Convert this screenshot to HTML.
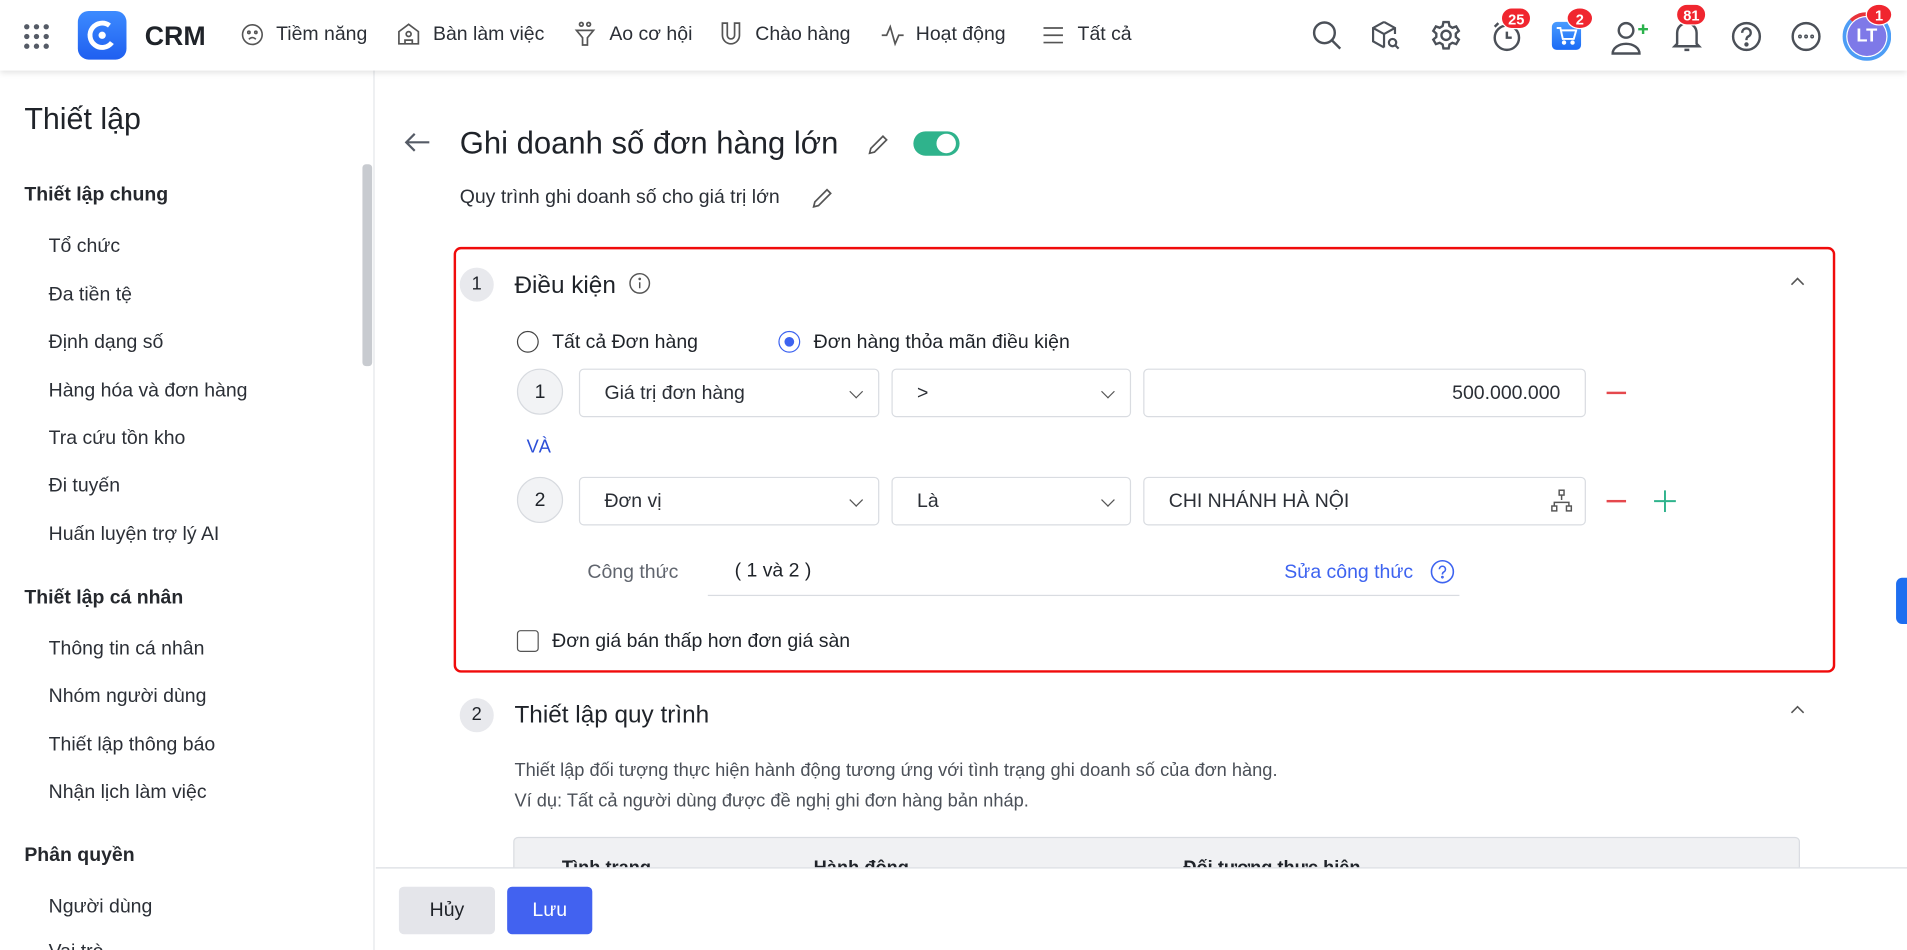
<!DOCTYPE html>
<html><head><meta charset="utf-8">
<style>
*{box-sizing:border-box;margin:0;padding:0}
html,body{width:1907px;height:950px;overflow:hidden;background:#fff}
#w{position:absolute;left:0;top:0;width:1568px;height:781px;transform:scale(1.2162,1.2164);transform-origin:0 0;font-family:"Liberation Sans","Noto Sans CJK SC",sans-serif;color:#1f2329;overflow:hidden}
.a{position:absolute;white-space:nowrap}
.top{position:absolute;left:0;top:0;width:1568px;height:58px;background:#fff;box-shadow:0 2px 5px rgba(0,0,0,.12);z-index:5}
.nav{font-size:16px;color:#2b2f36;top:20px}
.ic{position:absolute}
.side{position:absolute;left:0;top:58px;width:308px;height:723px;border-right:1px solid #e4e6ea}
.side .a{margin-top:2px}
.sh{font-size:16px;font-weight:bold;color:#25282d;left:20px}
.si{font-size:16px;color:#2b2f36;left:40px}
.badge{position:absolute;background:#f0262f;color:#fff;font-size:12px;font-weight:bold;border-radius:9px;height:18px;line-height:18px;text-align:center;padding:0 5px;border:1.5px solid #fff}
.sel{position:absolute;height:40px;border:1px solid #d9dce1;border-radius:4px;font-size:16px;line-height:39px;padding-left:20px;color:#2b2f36}
.chev{position:absolute;right:14px;top:14px;width:8px;height:8px;border-right:1px solid #555;border-bottom:1px solid #555;transform:rotate(45deg)}
.num{position:absolute;width:38px;height:38px;border-radius:50%;border:1px solid #d7dadf;background:#f2f3f5;text-align:center;line-height:38px;font-size:16px}
.step{position:absolute;width:28px;height:28px;border-radius:50%;background:#e8e9ed;text-align:center;line-height:28px;font-size:15px}
.minus{position:absolute;width:16px;height:1.6px;background:#e5484d}
</style></head><body><div id="w">

<div class="top">
  <svg class="ic" style="left:19px;top:19px" width="22" height="22" viewBox="0 0 22 22" fill="#555b66"><circle cx="3" cy="3" r="2.2"/><circle cx="11" cy="3" r="2.2"/><circle cx="19" cy="3" r="2.2"/><circle cx="3" cy="11" r="2.2"/><circle cx="11" cy="11" r="2.2"/><circle cx="19" cy="11" r="2.2"/><circle cx="3" cy="19" r="2.2"/><circle cx="11" cy="19" r="2.2"/><circle cx="19" cy="19" r="2.2"/></svg>
  <div class="a" style="left:64px;top:9px;width:40px;height:40px;border-radius:9px;background:linear-gradient(#3d8bff,#1f5ff0)"></div>
  <svg class="ic" style="left:70px;top:15px" width="28" height="28" viewBox="0 0 28 28" fill="none" stroke="#fff" stroke-width="4"><path d="M20 6 A10 10 0 1 0 22 20"/><circle cx="14" cy="14" r="3" fill="#fff" stroke="none"/></svg>
  <div class="a" style="left:119px;top:17px;font-size:22px;font-weight:bold">CRM</div>
  <svg class="ic" style="left:198px;top:19px" width="19" height="19" viewBox="0 0 20 20" fill="none" stroke="#555" stroke-width="1.4"><circle cx="10" cy="10" r="8.5"/><circle cx="7" cy="8" r="1"/><circle cx="13" cy="8" r="1"/><path d="M7 14q3-3 6 0"/></svg>
  <div class="a nav" style="left:227px">Tiềm năng</div>
  <svg class="ic" style="left:326px;top:18px" width="20" height="20" viewBox="0 0 20 20" fill="none" stroke="#555" stroke-width="1.4"><path d="M2 18V8l8-6 8 6v10z"/><circle cx="10" cy="10" r="2"/><path d="M7 18v-3h6v3"/></svg>
  <div class="a nav" style="left:356px">Bàn làm việc</div>
  <svg class="ic" style="left:472px;top:17px" width="18" height="22" viewBox="0 0 18 22" fill="none" stroke="#555" stroke-width="1.4"><circle cx="6" cy="3" r="1.5"/><circle cx="12" cy="3" r="1.5"/><path d="M2 8h14l-5 6v6h-4v-6z"/></svg>
  <div class="a nav" style="left:501px">Ao cơ hội</div>
  <svg class="ic" style="left:592px;top:17px" width="18" height="22" viewBox="0 0 18 22" fill="none" stroke="#555" stroke-width="1.4"><path d="M2 2v10a7 7 0 0 0 14 0V2h-4v10a3 3 0 0 1-6 0V2z"/></svg>
  <div class="a nav" style="left:621px">Chào hàng</div>
  <svg class="ic" style="left:724px;top:19px" width="20" height="20" viewBox="0 0 20 20" fill="none" stroke="#555" stroke-width="1.4"><path d="M1 10h4l3-7 4 14 3-7h4"/></svg>
  <div class="a nav" style="left:753px">Hoạt động</div>
  <svg class="ic" style="left:857px;top:20px" width="18" height="18" viewBox="0 0 18 18" stroke="#555" stroke-width="1.4"><path d="M1 3h16M1 9h16M1 15h16"/></svg>
  <div class="a nav" style="left:886px">Tất cả</div>

  <svg class="ic" style="left:1078px;top:16px" width="26" height="26" viewBox="0 0 26 26" fill="none" stroke="#4b5058" stroke-width="2"><circle cx="11" cy="11" r="8.5"/><path d="M17 17l7 7"/></svg>
  <svg class="ic" style="left:1126px;top:16px" width="26" height="27" viewBox="0 0 26 27" fill="none" stroke="#4b5058" stroke-width="1.8"><path d="M12 2l9 5v5M12 2L3 7v11l9 5M3 7l9 5 9-5M12 12v11"/><circle cx="19" cy="19" r="3"/><path d="M21 21l3 3"/></svg>
  <svg class="ic" style="left:1176px;top:16px" width="26" height="26" viewBox="0 0 24 24" fill="none" stroke="#4b5058" stroke-width="1.8"><circle cx="12" cy="12" r="3.5"/><path d="M10 2h4l.6 3 2.2 1.3 2.9-1 2 3.4-2.3 2v2.6l2.3 2-2 3.4-2.9-1L14.6 19l-.6 3h-4l-.6-3-2.2-1.3-2.9 1-2-3.4 2.3-2v-2.6l-2.3-2 2-3.4 2.9 1L9.4 5z"/></svg>
  <svg class="ic" style="left:1226px;top:17px" width="26" height="26" viewBox="0 0 26 26" fill="none" stroke="#4b5058" stroke-width="2"><circle cx="13" cy="14" r="10"/><path d="M13 9v5h4M3 5l3-3"/></svg>
  <div class="badge" style="left:1234px;top:6px">25</div>
  <div class="a" style="left:1276px;top:18px;width:24px;height:23px;border-radius:4px;background:linear-gradient(#4a9cff,#1a6af5)"></div>
  <svg class="ic" style="left:1279px;top:21px" width="18" height="17" viewBox="0 0 18 17" fill="none" stroke="#fff" stroke-width="1.6"><path d="M1 2h3l2 9h9l2-7H5"/><circle cx="7" cy="14" r="1" fill="#fff"/><circle cx="14" cy="14" r="1" fill="#fff"/></svg>
  <div class="badge" style="left:1288px;top:6px;border-radius:50%;width:22px;padding:0">2</div>
  <svg class="ic" style="left:1323px;top:16px" width="34" height="30" viewBox="0 0 34 30" fill="none" stroke="#4b5058" stroke-width="2"><circle cx="14" cy="9" r="6"/><path d="M3 28a11 8 0 0 1 22 0z"/><path d="M28 4v8M24 8h8" stroke="#2bb24c"/></svg>
  <svg class="ic" style="left:1374px;top:14px" width="26" height="30" viewBox="0 0 26 30" fill="none" stroke="#4b5058" stroke-width="2"><path d="M5 22V13a8 8 0 0 1 16 0v9l2 2H3z"/><path d="M11 27h4"/></svg>
  <div class="badge" style="left:1378px;top:3px">81</div>
  <svg class="ic" style="left:1423px;top:17px" width="26" height="26" viewBox="0 0 26 26" fill="none" stroke="#4b5058" stroke-width="2"><circle cx="13" cy="13" r="11"/><path d="M9.5 10a3.5 3.5 0 1 1 5 3c-1.3.7-1.5 1.4-1.5 3"/><circle cx="13" cy="19.5" r=".8" fill="#4b5058"/></svg>
  <svg class="ic" style="left:1472px;top:17px" width="26" height="26" viewBox="0 0 26 26" fill="none" stroke="#4b5058" stroke-width="2"><circle cx="13" cy="13" r="11"/><circle cx="8" cy="13" r=".6"/><circle cx="13" cy="13" r=".6"/><circle cx="18" cy="13" r=".6"/></svg>
  <div class="a" style="left:1515px;top:10px;width:40px;height:40px;border-radius:50%;border:3px solid #4d9df5;border-top-color:#e8333b;background:#fff"></div>
  <div class="a" style="left:1519px;top:14px;width:32px;height:32px;border-radius:50%;background:#7e79e8;color:#fff;font-weight:bold;font-size:15px;text-align:center;line-height:32px">LT</div>
  <div class="badge" style="left:1534px;top:3px;border-radius:50%;width:22px;padding:0">1</div>
</div>

<div class="side">
  <div class="a" style="left:20px;top:24px;font-size:25px">Thiết lập</div>
  <div class="a" style="left:298px;top:75px;width:8px;height:166px;background:#c8cbd0;border-radius:3px"></div>
  <div class="a sh" style="top:92px">Thiết lập chung</div>
  <div class="a si" style="top:134px">Tổ chức</div>
  <div class="a si" style="top:174px">Đa tiền tệ</div>
  <div class="a si" style="top:213px">Định dạng số</div>
  <div class="a si" style="top:253px">Hàng hóa và đơn hàng</div>
  <div class="a si" style="top:292px">Tra cứu tồn kho</div>
  <div class="a si" style="top:331px">Đi tuyến</div>
  <div class="a si" style="top:371px">Huấn luyện trợ lý AI</div>
  <div class="a sh" style="top:423px">Thiết lập cá nhân</div>
  <div class="a si" style="top:465px">Thông tin cá nhân</div>
  <div class="a si" style="top:504px">Nhóm người dùng</div>
  <div class="a si" style="top:544px">Thiết lập thông báo</div>
  <div class="a si" style="top:583px">Nhận lịch làm việc</div>
  <div class="a sh" style="top:635px">Phân quyền</div>
  <div class="a si" style="top:677px">Người dùng</div>
  <div class="a si" style="top:714px">Vai trò</div>
</div>

<svg class="ic" style="left:332px;top:108px" width="22" height="18" viewBox="0 0 22 18" fill="none" stroke="#555b66" stroke-width="1.8"><path d="M21 9H2M9 2L2 9l7 7"/></svg>
<div class="a" style="left:378px;top:104px;font-size:25.5px">Ghi doanh số đơn hàng lớn</div>
<svg class="ic" style="left:712px;top:109px" width="20" height="20" viewBox="0 0 20 20" fill="none" stroke="#555" stroke-width="1.4"><path d="M3 17l1-4L14 3l3 3L7 16z"/></svg>
<div class="a" style="left:751px;top:108px;width:38px;height:20px;border-radius:10px;background:#2fb38c"></div>
<div class="a" style="left:770px;top:110px;width:16px;height:16px;border-radius:50%;background:#fff"></div>
<div class="a" style="left:378px;top:154px;font-size:16px;color:#2b2f36">Quy trình ghi doanh số cho giá trị lớn</div>
<svg class="ic" style="left:666px;top:153px" width="20" height="20" viewBox="0 0 20 20" fill="none" stroke="#555" stroke-width="1.4"><path d="M3 17l1-4L14 3l3 3L7 16z"/></svg>

<div class="a" style="left:373px;top:203px;width:1136px;height:350px;border:2px solid #f00b0b;border-radius:6px"></div>
<div class="step" style="left:378px;top:220px">1</div>
<div class="a" style="left:423px;top:224px;font-size:20px">Điều kiện</div>
<svg class="ic" style="left:517px;top:224px" width="18" height="18" viewBox="0 0 18 18" fill="none" stroke="#555" stroke-width="1.2"><circle cx="9" cy="9" r="8"/><path d="M9 8v5"/><circle cx="9" cy="5.3" r=".5"/></svg>
<svg class="ic" style="left:1472px;top:227px" width="12" height="8" viewBox="0 0 12 8" fill="none" stroke="#555" stroke-width="1.3"><path d="M1 7l5-5 5 5"/></svg>

<div class="a" style="left:425px;top:272px;width:18px;height:18px;border-radius:50%;border:1.5px solid #444"></div>
<div class="a" style="left:454px;top:273px;font-size:16px">Tất cả Đơn hàng</div>
<div class="a" style="left:640px;top:272px;width:18px;height:18px;border-radius:50%;border:1.5px solid #3d63f0"></div>
<div class="a" style="left:645px;top:277px;width:8px;height:8px;border-radius:50%;background:#3d63f0"></div>
<div class="a" style="left:669px;top:273px;font-size:16px">Đơn hàng thỏa mãn điều kiện</div>

<div class="num" style="left:425px;top:303px">1</div>
<div class="sel" style="left:476px;top:303px;width:247px">Giá trị đơn hàng<div class="chev"></div></div>
<div class="sel" style="left:733px;top:303px;width:197px">&gt;<div class="chev"></div></div>
<div class="sel" style="left:940px;top:303px;width:364px;text-align:right;padding-right:20px">500.000.000</div>
<div class="minus" style="left:1321px;top:322px"></div>

<div class="a" style="left:433px;top:359px;font-size:15px;color:#2c4fd8">VÀ</div>

<div class="num" style="left:425px;top:392px">2</div>
<div class="sel" style="left:476px;top:392px;width:247px">Đơn vị<div class="chev"></div></div>
<div class="sel" style="left:733px;top:392px;width:197px">Là<div class="chev"></div></div>
<div class="sel" style="left:940px;top:392px;width:364px">CHI NHÁNH HÀ NỘI</div>
<svg class="ic" style="left:1274px;top:402px" width="20" height="20" viewBox="0 0 20 20" fill="none" stroke="#555" stroke-width="1.2"><rect x="8" y="1" width="4" height="4"/><rect x="2" y="14" width="4" height="4"/><rect x="14" y="14" width="4" height="4"/><path d="M10 5v4M4 14v-3h12v3"/></svg>
<div class="minus" style="left:1321px;top:411px"></div>
<svg class="ic" style="left:1360px;top:403px" width="18" height="18" viewBox="0 0 18 18" stroke="#2fb38c" stroke-width="1.6"><path d="M9 0v18M0 9h18"/></svg>

<div class="a" style="left:483px;top:462px;font-size:16px;color:#60656e">Công thức</div>
<div class="a" style="left:604px;top:461px;font-size:16px">( 1 và 2 )</div>
<div class="a" style="left:1056px;top:462px;font-size:16px;color:#3d63f0">Sửa công thức</div>
<svg class="ic" style="left:1176px;top:460px" width="20" height="20" viewBox="0 0 20 20" fill="none" stroke="#3d63f0" stroke-width="1.3"><circle cx="10" cy="10" r="9"/><path d="M7.5 8a2.5 2.5 0 1 1 3.5 2.3c-.8.4-1 .9-1 2"/><circle cx="10" cy="14.5" r=".5"/></svg>
<div class="a" style="left:582px;top:489px;width:618px;height:1px;background:#d9dce1"></div>

<div class="a" style="left:425px;top:518px;width:18px;height:18px;border-radius:3px;border:1.5px solid #555"></div>
<div class="a" style="left:454px;top:519px;font-size:16px">Đơn giá bán thấp hơn đơn giá sàn</div>

<div class="step" style="left:378px;top:574px">2</div>
<div class="a" style="left:423px;top:577px;font-size:20px;color:#1f2329">Thiết lập quy trình</div>
<svg class="ic" style="left:1472px;top:579px" width="12" height="8" viewBox="0 0 12 8" fill="none" stroke="#555" stroke-width="1.3"><path d="M1 7l5-5 5 5"/></svg>
<div class="a" style="left:423px;top:625px;font-size:15px;color:#4b5058">Thiết lập đối tượng thực hiện hành động tương ứng với tình trạng ghi doanh số của đơn hàng.</div>
<div class="a" style="left:423px;top:650px;font-size:15px;color:#4b5058">Ví dụ: Tất cả người dùng được đề nghị ghi đơn hàng bản nháp.</div>
<div class="a" style="left:422px;top:688px;width:1058px;height:60px;background:#f0f1f3;border:1px solid #d9dce1;border-radius:4px"></div>
<div class="a" style="left:462px;top:705px;font-size:15px;font-weight:bold">Tình trạng</div>
<div class="a" style="left:669px;top:705px;font-size:15px;font-weight:bold">Hành động</div>
<div class="a" style="left:973px;top:705px;font-size:15px;font-weight:bold">Đối tượng thực hiện</div>

<div class="a" style="left:309px;top:713px;width:1259px;height:68px;background:#fff;border-top:1px solid #d9dce1"></div>
<div class="a" style="left:328px;top:729px;width:79px;height:39px;border-radius:4px;background:#e4e5ea;text-align:center;line-height:39px;font-size:16px">Hủy</div>
<div class="a" style="left:417px;top:729px;width:70px;height:39px;border-radius:4px;background:#4262f0;color:#fff;text-align:center;line-height:39px;font-size:16px">Lưu</div>

<div class="a" style="left:1559px;top:475px;width:12px;height:38px;border-radius:5px 0 0 5px;background:#1e6ef0"></div>
</div></body></html>
